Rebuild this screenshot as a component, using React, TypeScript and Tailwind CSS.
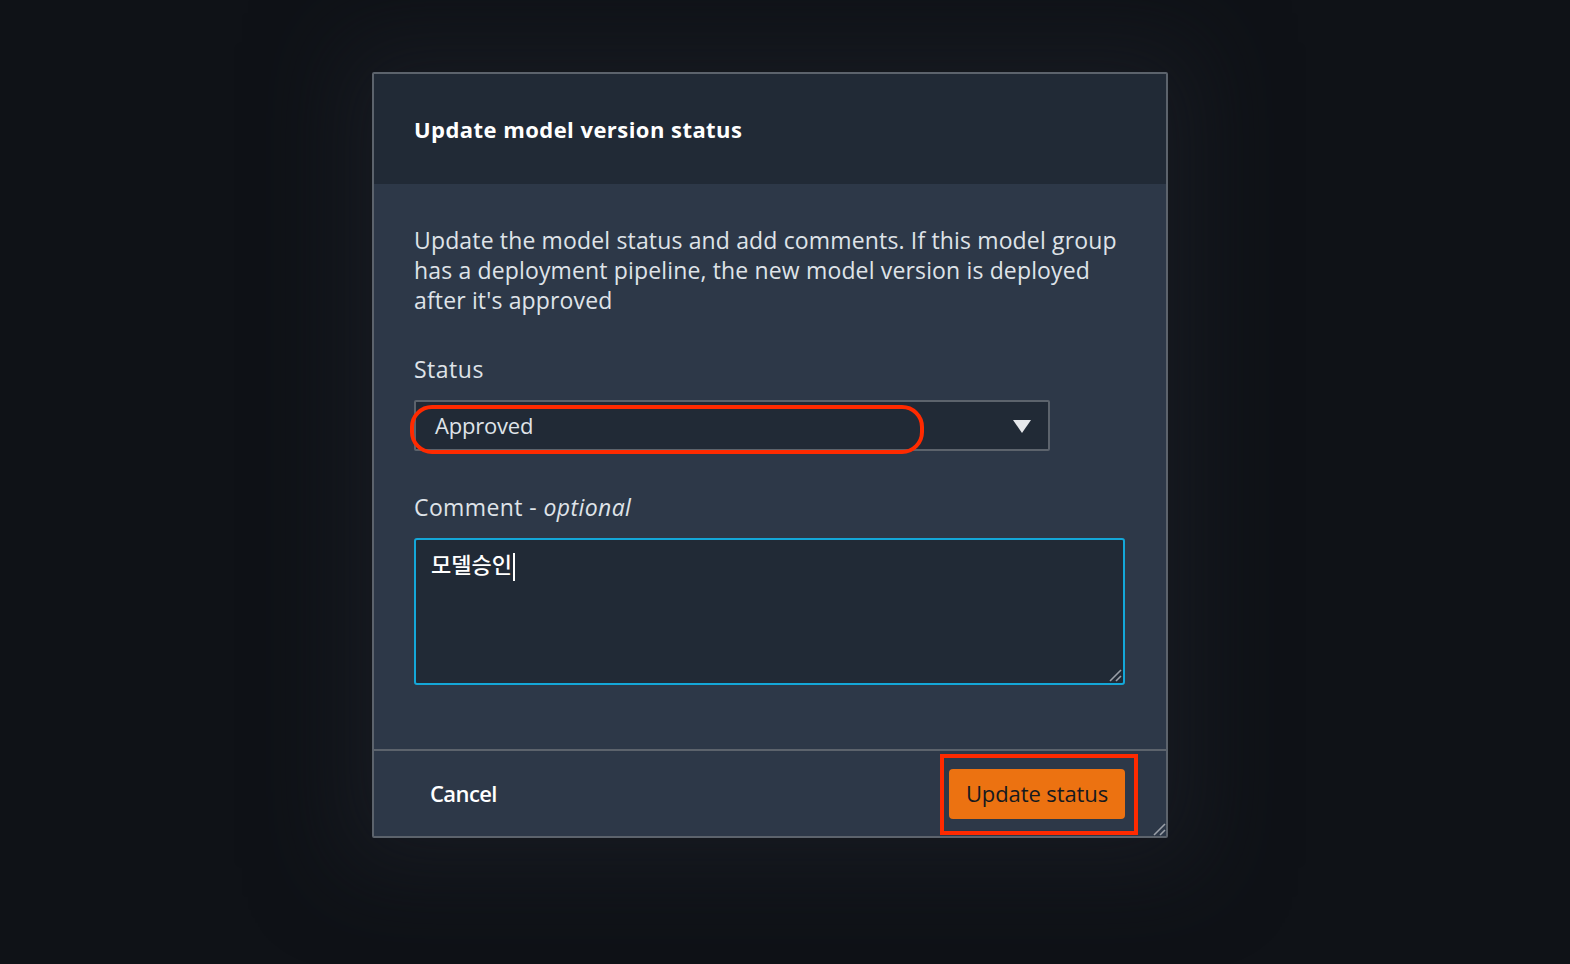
import React from "react";

function Resize({ className }: { className?: string }) {
  return (
    <svg className={className} width="14" height="14" viewBox="0 0 14 14">
      <line x1="2" y1="13" x2="13" y2="2" stroke="#9aa0a8" strokeWidth="1.6" />
      <line x1="8" y1="13" x2="13" y2="8" stroke="#9aa0a8" strokeWidth="1.6" />
    </svg>
  );
}

export default function App() {
  return (
    <div
      className="w-[1570px] h-[964px] bg-[#0f1217] pl-[372px] pt-[72px] overflow-hidden"
      style={{ fontFamily: '"Open Sans", "Noto Sans CJK KR", sans-serif' }}
    >
      <div className="relative w-[796px] border-2 border-[#5c636c] bg-[#2d3848] shadow-[0_0_90px_30px_rgba(28,32,40,0.6)] rounded-[2px]">
        {/* header */}
        <div className="h-[110px] bg-[#212a36] flex items-center px-[40px]">
          <h1 className="text-[22px] font-bold text-white tracking-[0.45px]">
            Update model version status
          </h1>
        </div>
        {/* body */}
        <div className="px-[40px] pt-[41px] pb-[64px]">
          <p className="text-[23px] leading-[30px] text-[#dfe3e8] w-[714px] tracking-[0.15px]">
            Update the model status and add comments. If this model group has a deployment pipeline, the new model version is deployed after it's approved
          </p>
          <div className="mt-[39px] text-[23px] leading-[30px] text-[#dfe3e8] tracking-[0.5px]">Status</div>
          <div className="relative mt-[16px] w-[636px] h-[51px] border-2 border-[#5c636c] bg-[#212a36] rounded-[2px] flex items-center justify-between pl-[19px] pr-[16px]">
            <span className="text-[22px] text-[#dfe3e8] tracking-[-0.2px]">Approved</span>
            <svg width="20" height="16" viewBox="0 0 20 16">
              <polygon points="1,2 19,2 10,15" fill="#e6e8eb" />
            </svg>
            <div className="absolute left-[-6px] top-[3px] w-[514px] h-[49px] border-[4px] border-[#ff2a00] rounded-[22px]" />
          </div>
          <div className="mt-[41px] text-[23px] leading-[30px] text-[#dfe3e8] tracking-[0.4px]">
            Comment - <i>optional</i>
          </div>
          <div className="relative mt-[16px] w-[711px] h-[147px] border-2 border-[#14a7d8] bg-[#212a36] rounded-[3px] px-[15px] pt-[8px]">
            <span className="text-[22px] leading-[30px] text-white font-medium" style={{ fontFamily: '"Noto Sans CJK KR", sans-serif' }}>
              모델승인
            </span>
            <span className="inline-block w-[2px] h-[28px] bg-white align-middle ml-[1px] -mt-[4px]" />
            <Resize className="absolute right-[1px] bottom-[1px]" />
          </div>
        </div>
        {/* footer */}
        <div className="relative border-t-2 border-[#5c636c] h-[87px] flex items-center justify-between pl-[56px] pr-[41px]">
          <span className="text-[22px] font-semibold text-white tracking-[-0.6px]">Cancel</span>
          <div className="relative">
            <button className="h-[50px] w-[176px] bg-[#ec7211] rounded-[4px] text-[22px] text-[#16191f] tracking-[-0.1px]">
              Update status
            </button>
            <div className="absolute left-[-9px] top-[-15px] w-[198px] h-[81px] border-[4px] border-[#ff2a00]" />
          </div>
          <Resize className="absolute right-[0px] bottom-[0px]" />
        </div>
      </div>
    </div>
  );
}
